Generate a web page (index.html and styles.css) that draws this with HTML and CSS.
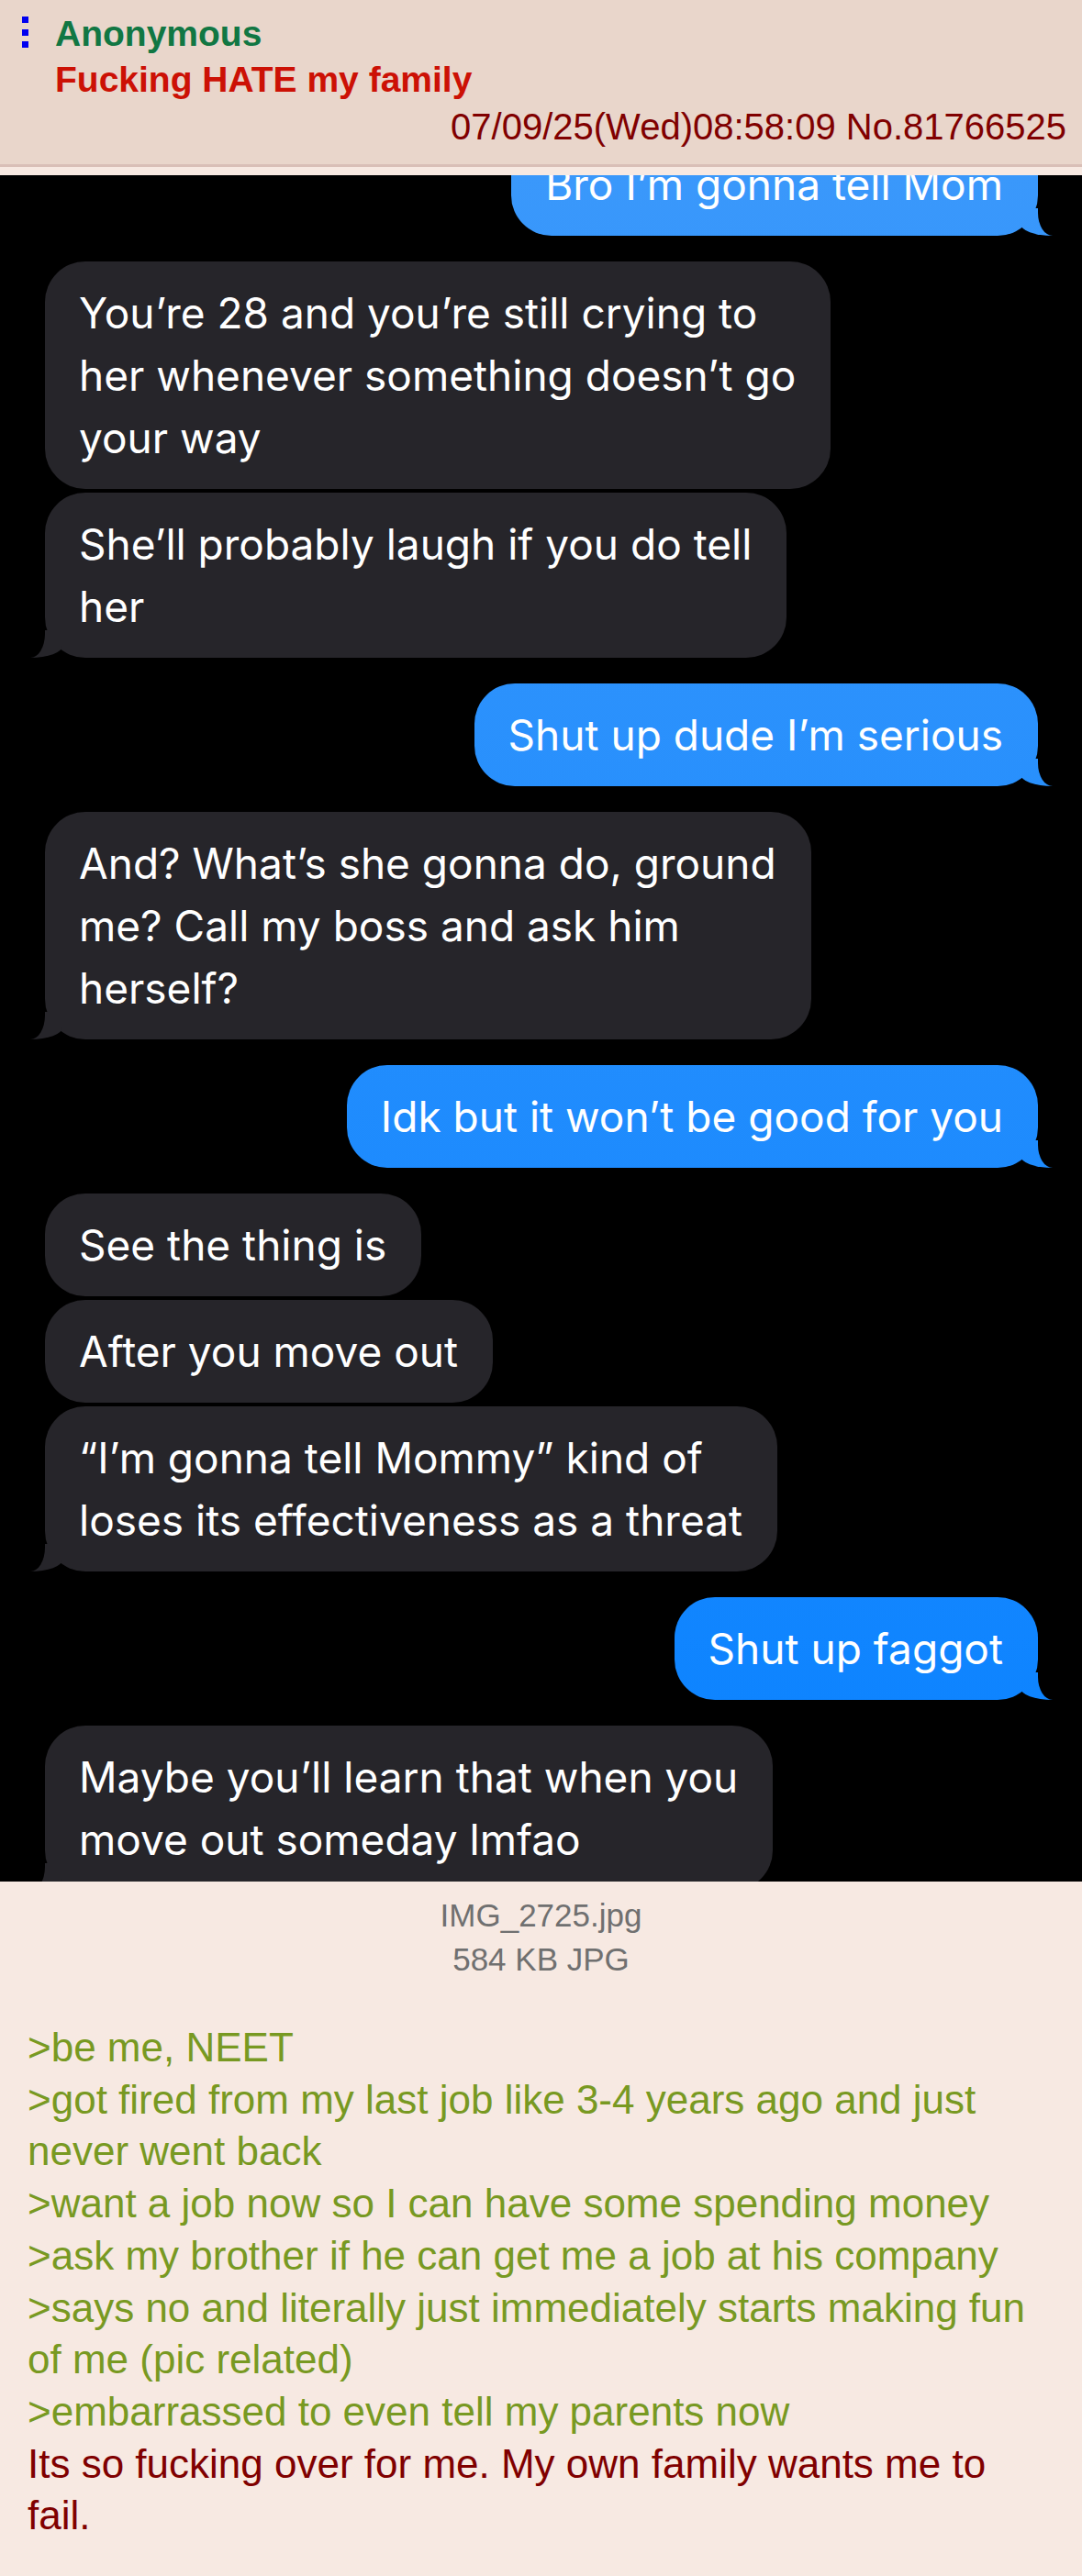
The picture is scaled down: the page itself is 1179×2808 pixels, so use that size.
FILE: index.html
```html
<!DOCTYPE html>
<html lang="en">
<head>
  <meta charset="UTF-8" />
  <meta name="viewport" content="width=device-width, initial-scale=1.0"/>
  <title>Fucking HATE my family</title>
  <link rel="stylesheet" href="styles.css">
</head>
<body>
  <div class="post-head">
    <div class="menu">
      <svg width="7" height="34" viewBox="0 0 7 34">
        <rect x="0" y="0" width="7" height="7" fill="#0000f0"/>
        <rect x="0" y="14" width="7" height="7" fill="#0000f0"/>
        <rect x="0" y="27" width="7" height="7" fill="#0000f0"/>
      </svg>
    </div>
    <div class="post-meta">
      <div class="name">Anonymous</div>
      <div class="subject">Fucking HATE my family</div>
      <div class="post-info">07/09/25(Wed)08:58:09 No.81766525</div>
    </div>
  </div>

  <div class="post-body">
    <div class="shot">
      <div class="thread">
        <div class="group sent">
          <div class="msg">Bro I’m gonna tell Mom</div>
        </div>
        <div class="group recv">
          <div class="msg">You’re 28 and you’re still crying to<br>her whenever something doesn’t go<br>your way</div>
          <div class="msg">She’ll probably laugh if you do tell<br>her</div>
        </div>
        <div class="group sent">
          <div class="msg">Shut up dude I’m serious</div>
        </div>
        <div class="group recv">
          <div class="msg">And? What’s she gonna do, ground<br>me? Call my boss and ask him<br>herself?</div>
        </div>
        <div class="group sent">
          <div class="msg">Idk but it won’t be good for you</div>
        </div>
        <div class="group recv">
          <div class="msg">See the thing is</div>
          <div class="msg">After you move out</div>
          <div class="msg">“I’m gonna tell Mommy” kind of<br>loses its effectiveness as a threat</div>
        </div>
        <div class="group sent">
          <div class="msg">Shut up faggot</div>
        </div>
        <div class="group recv">
          <div class="msg">Maybe you’ll learn that when you<br>move out someday lmfao</div>
        </div>
      </div>
    </div>

    <div class="file-info">
      <div>IMG_2725.jpg</div>
      <div>584 KB JPG</div>
    </div>

    <blockquote class="post-message">
      <span class="quote">&gt;be me, NEET</span><br>
      <span class="quote">&gt;got fired from my last job like 3-4 years ago and just never went back</span><br>
      <span class="quote">&gt;want a job now so I can have some spending money</span><br>
      <span class="quote">&gt;ask my brother if he can get me a job at his company</span><br>
      <span class="quote">&gt;says no and literally just immediately starts making fun of me (pic related)</span><br>
      <span class="quote">&gt;embarrassed to even tell my parents now</span><br>
      Its so fucking over for me. My own family wants me to fail.
    </blockquote>
  </div>
</body>
</html>
```

FILE: styles.css
```css
body {
  margin: 0;
  background: #f7e9e2;
  font-family: 'Liberation Sans', Arial, sans-serif;
}

/* cabeçalho do post */
.post-head {
  display: flex;
  background: #e9d6cb;
  border-bottom: 3px solid #d9bfb7;
  padding: 12px 17px 16px 24px;
}

.menu {
  width: 36px;
  flex-shrink: 0;
}

.menu svg {
  display: block;
  margin-top: 6px;
}

.post-meta {
  flex: 1;
}

.name {
  color: #117743;
  font-weight: bold;
  font-size: 39px;
  line-height: 50px;
}

.subject {
  color: #cc1105;
  font-weight: bold;
  font-size: 39px;
  line-height: 50px;
}

.post-info {
  color: #800000;
  font-size: 40px;
  line-height: 50px;
  margin-top: 1px;
  text-align: right;
}

.post-body {
  padding-top: 9px;
}

/* print do imessage */
.shot {
  background: #000;
  height: 1860px;
  overflow: hidden;
}

.thread {
  display: flex;
  flex-direction: column;
  gap: 28px;
  margin-top: -46px;
  padding: 0 48px 0 49px;
}

.group {
  display: flex;
  flex-direction: column;
  gap: 4px;
}

.group.sent {
  align-items: flex-end;
}

.group.recv {
  align-items: flex-start;
}

.msg {
  position: relative;
  padding: 22px 38px 22px 37px;
  border-radius: 44px;
  color: #fff;
  font-family: Inter, 'Noto Sans', sans-serif;
  font-size: 46px;
  line-height: 68px;
  white-space: nowrap;
}

.sent .msg,
.sent .msg:last-child::before {
  background: linear-gradient(180deg, #3a98fb 190px, #0e84ff 1860px) fixed;
}

.recv .msg {
  background: #26252a;
}

.recv .msg:last-child::before {
  background: #26252a;
}

.msg:last-child::before,
.msg:last-child::after {
  content: "";
  position: absolute;
  bottom: 0;
}

.sent .msg:last-child::before {
  right: -16px;
  width: 35px;
  height: 30px;
  border-bottom-left-radius: 35px 13px;
}

.sent .msg:last-child::after {
  right: -40px;
  width: 40px;
  height: 32px;
  background: #000;
  border-bottom-left-radius: 16px 25px;
}

.recv .msg:last-child::before {
  left: -16px;
  width: 35px;
  height: 30px;
  border-bottom-right-radius: 35px 13px;
}

.recv .msg:last-child::after {
  left: -40px;
  width: 40px;
  height: 32px;
  background: #000;
  border-bottom-right-radius: 16px 26px;
}

/* arquivo e texto */
.file-info {
  text-align: center;
  color: #707070;
  font-size: 35px;
  line-height: 48px;
  padding-top: 13px;
}

.post-message {
  margin: 44px 0 0;
  padding: 0 40px 37px 30px;
  color: #800000;
  font-size: 44px;
  line-height: 56.7px;
}

.quote {
  color: #789922;
}
```
